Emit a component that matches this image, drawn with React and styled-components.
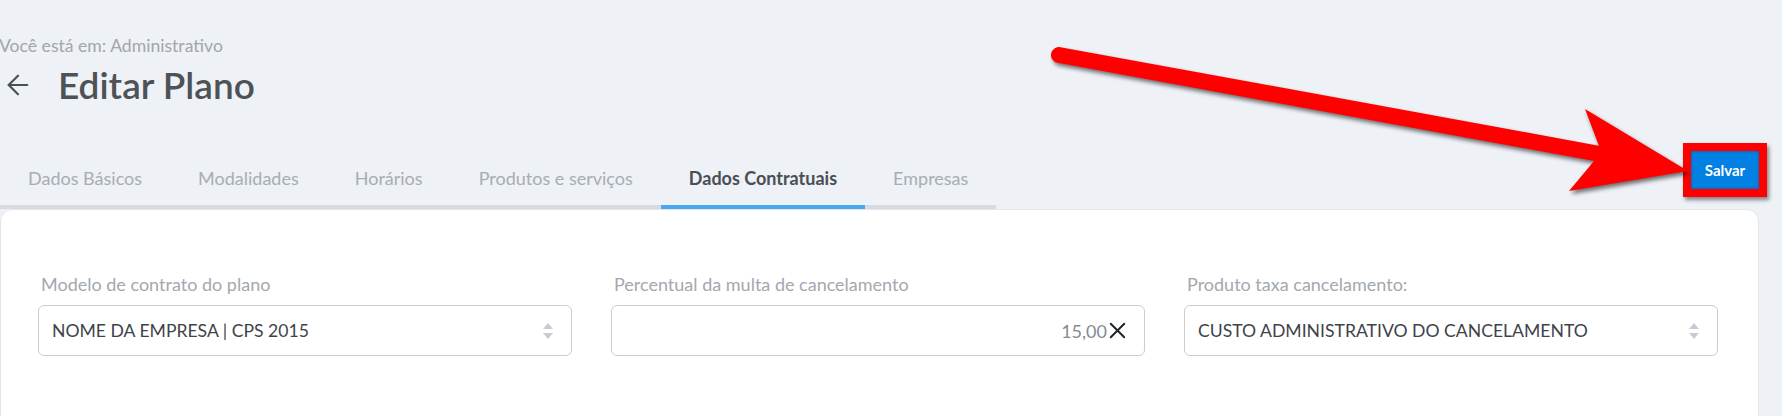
import styled, { createGlobalStyle } from 'styled-components';
import { ArrowLeft, X } from 'lucide-react';

const GlobalStyle = createGlobalStyle`
  body {
    margin: 0;
    background: #eef1f6;
    font-family: 'Lato', 'Noto Sans', sans-serif;
    overflow: hidden;
  }
`;

const tabs = [
  'Dados Básicos',
  'Modalidades',
  'Horários',
  'Produtos e serviços',
  'Dados Contratuais',
  'Empresas',
];

const SelectArrows = () => (
  <svg width="12" height="18" viewBox="0 0 12 18">
    <path d="M6 1 L11 7 H1 Z" fill="#c8ccd2" />
    <path d="M1 11 H11 L6 17 Z" fill="#c8ccd2" />
  </svg>
);

const Annotation = () => (
  <ArrowSvg width="1782" height="416" viewBox="0 0 1782 416">
    <g style={{ filter: 'drop-shadow(2px 3px 2px rgba(0,0,0,0.55))' }}>
      <line
        x1="1059"
        y1="55"
        x2="1600"
        y2="154"
        stroke="#ff0000"
        strokeWidth="16"
        strokeLinecap="round"
      />
      <polygon
        points="1688,171 1569,191 1594,161 1599,146 1585,109"
        fill="#ff0000"
      />
    </g>
  </ArrowSvg>
);

const App = () => {
  const active = 'Dados Contratuais';

  return (
    <>
      <GlobalStyle />
      <Page>
        <Breadcrumb>Você está em: Administrativo</Breadcrumb>
        <TitleRow>
          <BackButton>
            <ArrowLeft size={32} strokeWidth={1.6} />
          </BackButton>
          <Title>Editar Plano</Title>
        </TitleRow>

        <TabRow>
          <TabList>
            {tabs.map((t) => (
              <Tab key={t} $active={t === active}>
                {t}
              </Tab>
            ))}
          </TabList>
          <Highlight>
            <SaveButton>Salvar</SaveButton>
          </Highlight>
        </TabRow>

        <Card>
          <FieldGrid>
            <Field>
              <Label>Modelo de contrato do plano</Label>
              <Input>
                <Value>NOME DA EMPRESA | CPS 2015</Value>
                <SelectArrows />
              </Input>
            </Field>
            <Field>
              <Label>Percentual da multa de cancelamento</Label>
              <Input $right>
                <Amount>15,00</Amount>
                <X size={27} strokeWidth={1.7} color="#1f2328" />
              </Input>
            </Field>
            <Field>
              <Label>Produto taxa cancelamento:</Label>
              <Input>
                <Value>CUSTO ADMINISTRATIVO DO CANCELAMENTO</Value>
                <SelectArrows />
              </Input>
            </Field>
          </FieldGrid>
        </Card>

        <Annotation />
      </Page>
    </>
  );
};

const Page = styled.div`
  position: relative;
  width: 1782px;
  height: 416px;
  padding-top: 35px;
  box-sizing: border-box;
`;

const ArrowSvg = styled.svg`
  position: absolute;
  left: 0;
  top: 0;
  pointer-events: none;
`;

const Breadcrumb = styled.div`
  margin-left: -1px;
  font-size: 17.6px;
  line-height: 22px;
  color: #a2a6ab;
`;

const TitleRow = styled.div`
  display: flex;
  align-items: center;
  margin-top: 6px;
  height: 44px;
`;

const BackButton = styled.span`
  display: flex;
  color: #4b5056;
  margin-left: 2px;
  width: 56px;
`;

const Title = styled.h1`
  margin: 0;
  font-size: 37px;
  line-height: 44px;
  font-weight: 600;
  color: #4d5257;
`;

const TabRow = styled.div`
  display: flex;
  justify-content: space-between;
  align-items: flex-end;
  width: 1759px;
  margin-top: 36px;
`;

const TabList = styled.div`
  display: flex;
  border-bottom: 4px solid #d7dae1;
`;

const Tab = styled.div`
  position: relative;
  padding: 0 28px 15px;
  font-size: 18px;
  line-height: 24px;
  color: ${(p) => (p.$active ? '#4a4f55' : '#a8adb3')};
  font-weight: ${(p) => (p.$active ? 700 : 400)};

  &::after {
    content: '';
    display: ${(p) => (p.$active ? 'block' : 'none')};
    position: absolute;
    left: 0;
    right: 0;
    bottom: -4px;
    height: 4px;
    background: #48a7f3;
  }
`;

const Highlight = styled.div`
  border: 8px solid #ff0000;
  margin-bottom: 12px;
  margin-right: -8px;
  box-shadow: 2px 3px 4px rgba(0, 0, 0, 0.45);
`;

const SaveButton = styled.button`
  display: block;
  width: 68px;
  height: 38px;
  border: none;
  background: #0380e3;
  color: #fff;
  font-family: inherit;
  font-size: 15px;
  font-weight: 700;
  box-shadow: inset 0 0 3px rgba(0, 0, 0, 0.35);
`;

const Card = styled.div`
  width: 1759px;
  box-sizing: border-box;
  min-height: 260px;
  background: #fff;
  border: 1px solid #e2e5ea;
  border-radius: 12px;
  padding: 62px 38px 0 37px;
`;

const FieldGrid = styled.div`
  display: grid;
  grid-template-columns: repeat(3, 534px);
  column-gap: 39px;
`;

const Field = styled.div`
  display: flex;
  flex-direction: column;
`;

const Label = styled.label`
  font-size: 18px;
  line-height: 24px;
  color: #a3a8ae;
  margin-bottom: 9px;
  padding-left: 3px;
`;

const Input = styled.div`
  display: flex;
  align-items: center;
  justify-content: ${(p) => (p.$right ? 'flex-end' : 'space-between')};
  height: 51px;
  box-sizing: border-box;
  border: 1px solid #c9cdd3;
  border-radius: 6px;
  padding: ${(p) => (p.$right ? '0 13px 0 13px' : '0 17px 0 13px')};
`;

const Value = styled.span`
  font-size: 17.6px;
  color: #3e4349;
`;

const Amount = styled.span`
  font-size: 18px;
  color: #868b92;
  margin-right: -3px;
`;

export default App;
